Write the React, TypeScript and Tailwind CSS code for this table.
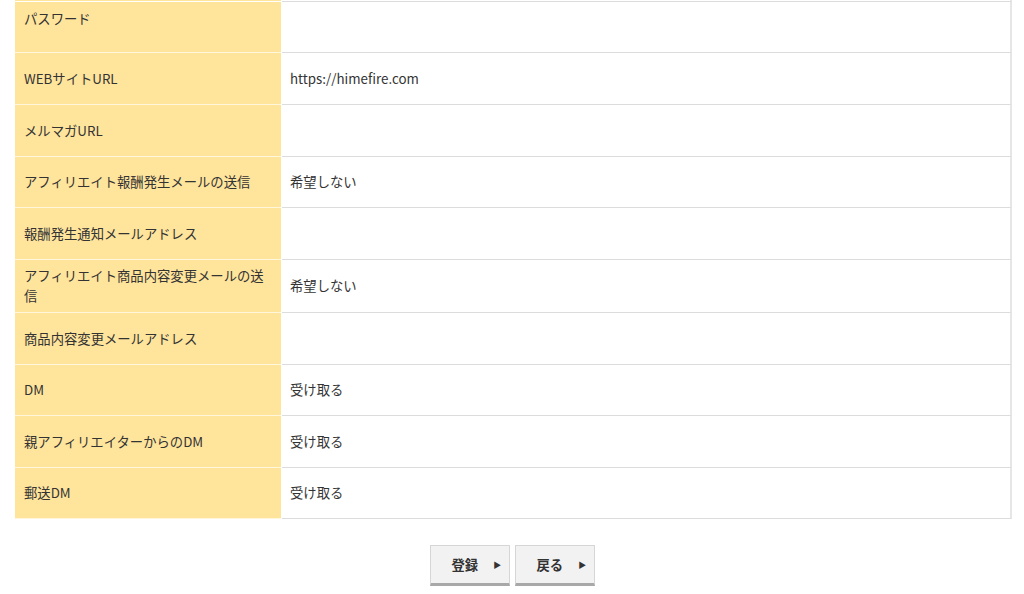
const rows: { label: string; value: string; h: string; top?: boolean }[] = [
  { label: "パスワード", value: "", h: "h-[51px]", top: true },
  { label: "WEBサイトURL", value: "https://himefire.com", h: "h-[52px]" },
  { label: "メルマガURL", value: "", h: "h-[52px]" },
  { label: "アフィリエイト報酬発生メールの送信", value: "希望しない", h: "h-[51px]" },
  { label: "報酬発生通知メールアドレス", value: "", h: "h-[52px]" },
  { label: "アフィリエイト商品内容変更メールの送信", value: "希望しない", h: "h-[53px]" },
  { label: "商品内容変更メールアドレス", value: "", h: "h-[52px]" },
  { label: "DM", value: "受け取る", h: "h-[51px]" },
  { label: "親アフィリエイターからのDM", value: "受け取る", h: "h-[52px]" },
  { label: "郵送DM", value: "受け取る", h: "h-[51px]" },
];

function FormButton({ label }: { label: string }) {
  return (
    <button
      type="button"
      className="w-[80px] h-[41px] flex items-center justify-start gap-[15px] pl-[21px] bg-[#f2f2f2] border border-[#d6d6d6] border-b-[3px] border-b-[#a8a8a8] text-[13.33px] font-bold text-[#333]"
    >
      <span>{label}</span>
      <span className="text-[8px] leading-none">▶</span>
    </button>
  );
}

export default function App() {
  return (
    <div
      className="w-[1024px] h-[594px] bg-white overflow-hidden text-[13.33px] text-[#333]"
      style={{ fontFamily: '"Noto Sans CJK JP", "Noto Sans", sans-serif' }}
    >
      <div className="ml-[15px] w-[997px]">
        <div className="flex h-[2px]">
          <div className="w-[266px] bg-[#ffe49c] border-b border-white" />
          <div className="w-px" />
          <div className="flex-1 border-b border-[#dcdcdc] border-r-2 border-r-[#e6e6e6]" />
        </div>
        {rows.map((r) => (
          <div key={r.label} className={`flex ${r.h}`}>
            <div
              className={`w-[266px] bg-[#ffe49c] border-b border-[#fff6dc] pl-[9px] pr-[10px] flex ${
                r.top ? "items-start pt-[7px]" : "items-center"
              }`}
            >
              <span className="leading-[20px]">{r.label}</span>
            </div>
            <div className="w-px" />
            <div className="flex-1 border-b border-[#dcdcdc] border-r-2 border-r-[#e6e6e6] px-[8px] flex items-center">
              <span className="leading-[20px]">{r.value}</span>
            </div>
          </div>
        ))}
      </div>
      <div className="flex justify-center gap-[5px] mt-[26px]">
        <FormButton label="登録" />
        <FormButton label="戻る" />
      </div>
    </div>
  );
}
